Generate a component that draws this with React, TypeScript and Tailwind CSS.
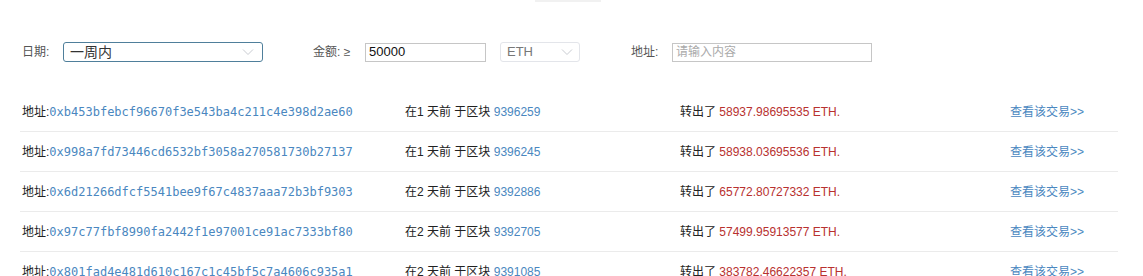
import React from 'react'

const rows = [
  { addr: '0xb453bfebcf96670f3e543ba4c211c4e398d2ae60', days: 1, block: '9396259', amount: '58937.98695535' },
  { addr: '0x998a7fd73446cd6532bf3058a270581730b27137', days: 1, block: '9396245', amount: '58938.03695536' },
  { addr: '0x6d21266dfcf5541bee9f67c4837aaa72b3bf9303', days: 2, block: '9392886', amount: '65772.80727332' },
  { addr: '0x97c77fbf8990fa2442f1e97001ce91ac7333bf80', days: 2, block: '9392705', amount: '57499.95913577' },
  { addr: '0x801fad4e481d610c167c1c45bf5c7a4606c935a1', days: 2, block: '9391085', amount: '383782.46622357' },
]

const Chevron = () => (
  <svg width="12" height="8" viewBox="0 0 12 8" fill="none" stroke="#c9ccd2" strokeWidth="1">
    <path d="M1 1.5 L6 6.5 L11 1.5" />
  </svg>
)

export default function App() {
  return (
    <div
      className="relative w-[1143px] h-[276px] overflow-hidden bg-white text-[12px] text-[#222]"
      style={{ fontFamily: '"Liberation Sans", "Noto Sans CJK SC", sans-serif' }}
    >
      <div className="absolute left-[535px] top-0 w-[66px] h-[2px] bg-[#f1f1f1]" />

      {/* filters */}
      <div className="flex items-center pt-[42px] pl-[22px] h-[62px]">
        <span className="text-[#555] w-[41px]">日期:</span>
        <div className="flex items-center justify-between w-[200px] h-[20px] border border-[#4f7f9b] rounded-[3px] pl-[6px] pr-[8px]">
          <span className="text-[14px] text-[#333]">一周内</span>
          <Chevron />
        </div>
        <span className="ml-[50px] w-[52px] text-[#555]">金额: ≥</span>
        <div className="flex items-center w-[121px] h-[19px] border border-[#c6c6c6] pl-[3px]">
          <span className="text-[13px] text-[#111]">50000</span>
        </div>
        <div className="ml-[14px] flex items-center justify-between w-[80px] h-[20px] border border-[#e3e5ea] rounded-[3px] pl-[6px] pr-[6px]">
          <span className="text-[13px] text-[#777]">ETH</span>
          <Chevron />
        </div>
        <span className="ml-[51px] w-[41px] text-[#555]">地址:</span>
        <div className="flex items-center w-[200px] h-[19px] border border-[#c6c6c6] pl-[3px]">
          <span className="text-[12px] text-[#aaa]">请输入内容</span>
        </div>
      </div>

      {/* list */}
      <div className="ml-[20px] w-[1098px] mt-[30px]">
        {rows.map((r, i) => (
          <div
            key={r.addr}
            className={`flex items-center h-[40px] pl-[2px] ${i < rows.length - 1 ? 'border-b border-[#ebebeb]' : ''}`}
          >
            <div className="w-[383px] flex items-center">
              <span>地址:</span>
              <span className="text-[#4a87c0]" style={{ fontFamily: '"DejaVu Sans Mono", monospace' }}>
                {r.addr}
              </span>
            </div>
            <div className="w-[275px]">
              在{r.days} 天前 于区块 <span className="text-[#4a87c0]">{r.block}</span>
            </div>
            <div className="w-[330px]">
              转出了 <span className="text-[#b8312f]">{r.amount} ETH.</span>
            </div>
            <div className="text-[#4a87c0]">查看该交易&gt;&gt;</div>
          </div>
        ))}
      </div>
    </div>
  )
}
